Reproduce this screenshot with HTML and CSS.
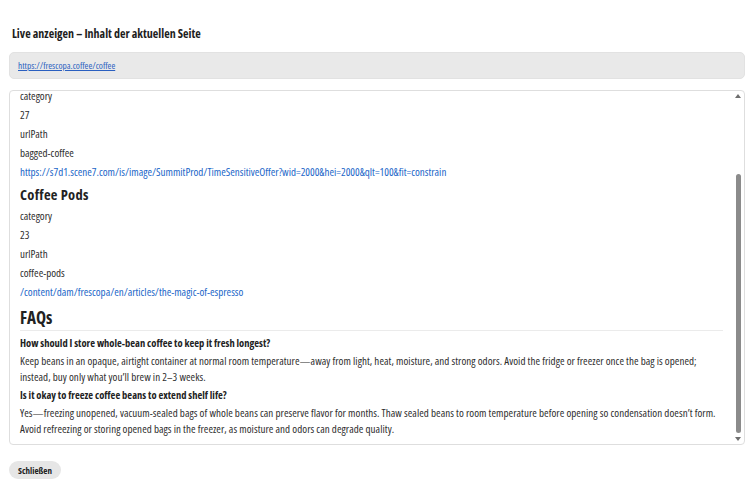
FILE: index.html
```html
<!DOCTYPE html>
<html lang="de">
<head>
<meta charset="utf-8">
<title>Live anzeigen</title>
<link rel="stylesheet" href="styles.css">
</head>
<body>
<div class="page">
  <h1 class="title">Live anzeigen – Inhalt der aktuellen Seite</h1>
  <div class="urlbox"><a class="urllink" href="#">https://frescopa.coffee/coffee</a></div>
  <div class="panel">
    <div class="content">
      <p class="item">category</p>
      <p class="item">27</p>
      <p class="item">urlPath</p>
      <p class="item">bagged-coffee</p>
      <p class="item"><a class="link" href="#">https://s7d1.scene7.com/is/image/SummitProd/TimeSensitiveOffer?wid=2000&amp;hei=2000&amp;qlt=100&amp;fit=constrain</a></p>
      <h2 class="subhead">Coffee Pods</h2>
      <p class="item">category</p>
      <p class="item">23</p>
      <p class="item">urlPath</p>
      <p class="item">coffee-pods</p>
      <p class="item"><a class="link" href="#">/content/dam/frescopa/en/articles/the-magic-of-espresso</a></p>
      <h2 class="section">FAQs</h2>
      <p class="question">How should I store whole-bean coffee to keep it fresh longest?</p>
      <p class="answer">Keep beans in an opaque, airtight container at normal room temperature—away from light, heat, moisture, and strong odors. Avoid the fridge or freezer once the bag is opened; instead, buy only what you’ll brew in 2–3 weeks.</p>
      <p class="question">Is it okay to freeze coffee beans to extend shelf life?</p>
      <p class="answer">Yes—freezing unopened, vacuum-sealed bags of whole beans can preserve flavor for months. Thaw sealed beans to room temperature before opening so condensation doesn’t form. Avoid refreezing or storing opened bags in the freezer, as moisture and odors can degrade quality.</p>
    </div>
    <div class="scrollbar">
      <div class="arrow up"></div>
      <div class="track"><div class="thumb"></div></div>
      <div class="arrow down"></div>
    </div>
  </div>
  <div class="actions"><button class="btn">Schließen</button></div>
</div>
</body>
</html>
```
FILE: styles.css
```css
html, body {
  margin: 0;
  padding: 0;
  background: #ffffff;
}
body {
  font-family: "Open Sans", "Noto Sans", sans-serif;
  font-stretch: condensed;
  color: #2e2e2e;
}
.page {
  display: flex;
  flex-direction: column;
  padding: 26px 5px 0 9px;
}
.title {
  margin: 0 0 10px 3px;
  font-size: 12px;
  line-height: 16px;
  font-weight: 700;
  color: #1d1d1d;
}
.urlbox {
  height: 27px;
  box-sizing: border-box;
  background: #e9e9e9;
  border: 1px solid #e2e2e2;
  border-radius: 5px;
  display: flex;
  align-items: center;
  padding-left: 8px;
}
.urllink {
  font-size: 9.3px;
  color: #2a5fc0;
  text-decoration: underline;
}
.panel {
  margin-top: 11px;
  height: 355px;
  box-sizing: border-box;
  border: 1px solid #dedede;
  border-radius: 4px;
  display: flex;
  overflow: hidden;
}
.content {
  flex: 1;
  min-width: 0;
  display: flex;
  flex-direction: column;
  justify-content: flex-end;
  overflow: hidden;
  padding: 0 6px 7px 10px;
  font-size: 11px;
}
.item {
  margin: 0;
  line-height: 19px;
  white-space: nowrap;
}
.link {
  color: #2166c8;
  text-decoration: none;
}
.subhead {
  margin: 5px 0 2px;
  font-size: 14.5px;
  line-height: 18px;
  letter-spacing: 0.3px;
  font-weight: 700;
  color: #222;
}
.section {
  margin: 6px 3px 2px 0;
  padding-bottom: 1px;
  font-size: 17px;
  line-height: 22px;
  font-weight: 700;
  color: #222;
  border-bottom: 1px solid #ebebeb;
}
.question {
  margin: 1px 0;
  font-size: 10.5px;
  line-height: 18px;
  font-weight: 700;
  color: #222;
}
.answer {
  margin: 0;
  line-height: 16px;
  letter-spacing: 0.05px;
}
.scrollbar {
  width: 12px;
  flex: none;
  display: flex;
  flex-direction: column;
  align-items: center;
}
.arrow {
  width: 0;
  height: 0;
  border-left: 3px solid transparent;
  border-right: 3px solid transparent;
}
.arrow.up {
  margin-top: 3px;
  border-bottom: 4px solid #6e6e6e;
}
.arrow.down {
  margin-bottom: 3px;
  border-top: 4px solid #6e6e6e;
}
.track {
  flex: 1;
  display: flex;
  flex-direction: column;
  justify-content: flex-end;
  padding: 0 0 4px;
}
.thumb {
  width: 5px;
  height: 259px;
  background: #8b8b8b;
  border-radius: 3px;
}
.actions {
  margin-top: 16px;
  display: flex;
}
.btn {
  height: 18px;
  padding: 0 9px;
  border: none;
  border-radius: 9px;
  background: #e6e6e6;
  font-family: "Open Sans", "Noto Sans", sans-serif;
  font-stretch: condensed;
  font-size: 9px;
  font-weight: 700;
  color: #222;
}
```
